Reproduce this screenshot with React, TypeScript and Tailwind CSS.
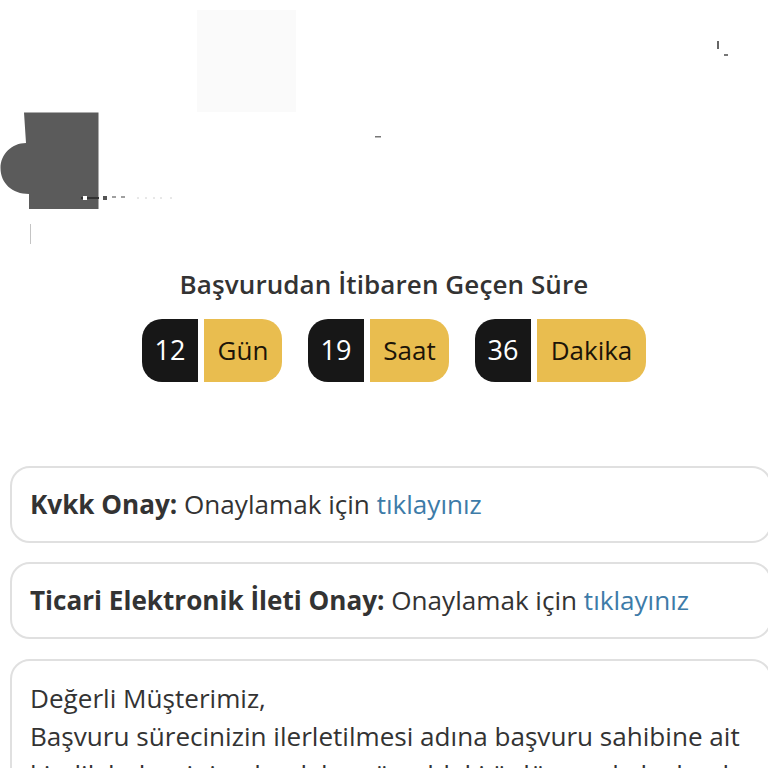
import React from 'react';

const sans = "font-['Open_Sans',sans-serif]";

function Timer({ value, label, goldW }: { value: string; label: string; goldW: string }) {
  return (
    <div className="flex h-[63px] gap-[6px] text-[26px]">
      <div className="flex w-[56px] items-center justify-center rounded-l-[20px] bg-[#171717] text-[27px] text-white">{value}</div>
      <div className={`flex items-center justify-center rounded-r-[20px] bg-[#e9bd4f] text-[#1c1408] ${goldW}`}>{label}</div>
    </div>
  );
}

function Consent({ title }: { title: string }) {
  return (
    <div className="flex h-[77px] w-[762px] items-center rounded-[20px] border-2 border-[#e0e0e0] pl-[18px] text-[26.1px] text-[#333333]">
      <p>
        <b className="font-bold">{title}:</b> Onaylamak için <a className="text-[#3d7ba8]">tıklayınız</a>
      </p>
    </div>
  );
}

export default function App() {
  return (
    <div className={`h-[768px] w-[768px] overflow-hidden bg-white ${sans}`}>
      {/* top area: remains of a broken logo image */}
      <svg width="768" height="267" viewBox="0 0 768 267" className="block">
        <rect x="197" y="10" width="99" height="102" fill="#fafafa" />
        <path
          d="M24 112.500H98.500V209H29V194C12 194 0.500 183 0.500 168C0.500 154 12 143 26 143Z"
          fill="#5b5b5b"
        />
        <rect x="81" y="197" width="18" height="2" fill="#333333" />
        <rect x="83" y="196" width="4" height="4" fill="#ffffff" />
        <rect x="103" y="196" width="4" height="4" fill="#555555" />
        <rect x="112" y="196" width="4" height="2" fill="#a0a0a0" />
        <rect x="121" y="196" width="4" height="2" fill="#a0a0a0" />
        <path d="M137 198h2M145 198h2M153 198h2M160 198h2M170 198h2" stroke="#d0d0d0" />
        <rect x="30" y="224" width="1" height="20" fill="#c4c4c4" />
        <rect x="375" y="136" width="6" height="1.500" fill="#777777" />
        <rect x="717" y="41" width="2" height="8" fill="#666666" />
        <rect x="724" y="54" width="4" height="2" fill="#777777" />
      </svg>

      <h1 className="text-center text-[26px] leading-[34px] font-semibold tracking-[0.1px] text-[#333333]">
        Başvurudan İtibaren Geçen Süre
      </h1>

      <div className="mt-[18px] ml-[20px] flex justify-center gap-[26px]">
        <Timer value="12" label="Gün" goldW="w-[78px]" />
        <Timer value="19" label="Saat" goldW="w-[79px]" />
        <Timer value="36" label="Dakika" goldW="w-[109px]" />
      </div>

      <div className="mt-[84px] ml-[10px] flex flex-col gap-[19px]">
        <Consent title="Kvkk Onay" />
        <Consent title="Ticari Elektronik İleti Onay" />
        <div className="mt-[1px] w-[762px] rounded-[20px] border-2 border-[#e0e0e0] pt-[18px] pl-[18px] text-[26.1px] leading-[38px] text-[#333333]">
          <p>Değerli Müşterimiz,</p>
          <p className="w-[730px]">
            Başvuru sürecinizin ilerletilmesi adına başvuru sahibine ait kimlik belgesinin olarak bu görseldeki önlü ve arkalı olarak
          </p>
        </div>
      </div>
    </div>
  );
}
